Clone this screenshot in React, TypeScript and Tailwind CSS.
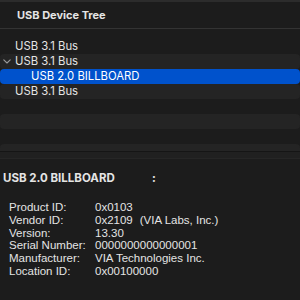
import React from 'react';

const font = { fontFamily: 'Inter, "Liberation Sans", sans-serif' };

type Row = { label: string; depth: number; open?: boolean; selected?: boolean };

const rows: Row[] = [
  { label: 'USB 3.1 Bus', depth: 0 },
  { label: 'USB 3.1 Bus', depth: 0, open: true },
  { label: 'USB 2.0 BILLBOARD', depth: 1, selected: true },
  { label: 'USB 3.1 Bus', depth: 0 },
  { label: '', depth: 0 },
  { label: '', depth: 0 },
  { label: '', depth: 0 },
  { label: '', depth: 0 },
];

const details: [string, React.ReactNode][] = [
  ['Product ID:', '0x0103'],
  ['Vendor ID:', <>0x2109<span className="ml-[7px]">(VIA Labs, Inc.)</span></>],
  ['Version:', '13.30'],
  ['Serial Number:', '0000000000000001'],
  ['Manufacturer:', 'VIA Technologies Inc.'],
  ['Location ID:', '0x00100000'],
];

function App() {
  return (
    <div className="w-[300px] h-[300px] bg-[#1c1c1c] overflow-hidden flex flex-col text-[#e4e4e4]" style={font}>
      {/* Header */}
      <div className="border-t-2 border-[#2c2c2c] h-[29px] flex items-center pl-[17px] font-bold text-[11px] border-b border-b-[#333333] shrink-0">
        USB Device Tree
      </div>

      {/* Tree list */}
      <div className="h-[122px] pt-[10px] overflow-hidden shrink-0">
        {rows.map((r, i) => (
          <div
            key={i}
            className={
              'h-[15px] flex items-center text-[11.3px] rounded-[4px] relative ' +
              (r.selected ? 'bg-[#0052cc] text-white' : i % 2 === 1 ? 'bg-[#242424]' : '')
            }
            style={{ paddingLeft: r.depth ? 31 : 15 }}
          >
            {r.open && (
              <svg className="absolute left-[3px] top-[5px]" width="8" height="5" viewBox="0 0 8 5" fill="none">
                <path d="M0.8 0.8 L4 4 L7.2 0.8" stroke="#9a9a9a" strokeWidth="1.1" strokeLinecap="round" strokeLinejoin="round" />
              </svg>
            )}
            {r.label}
          </div>
        ))}
      </div>

      {/* Split */}
      <div className="h-[8px] bg-[#202020] border-t border-[#151515] border-b border-b-[#262626] shrink-0" />

      {/* Details */}
      <div className="flex-1 pt-[13px] pl-[3px]">
        <div className="flex items-center font-bold text-[11.5px] h-[14px]">
          <span className="w-[149px]">USB 2.0 BILLBOARD</span>
          <span>:</span>
        </div>
        <div className="mt-[15px] pl-[6px] text-[11.5px] leading-[12.8px]" style={{ fontFamily: '"Liberation Sans", Arial, sans-serif' }}>
          {details.map(([k, v]) => (
            <div key={k} className="flex">
              <span className="w-[86px] shrink-0">{k}</span>
              <span className="whitespace-nowrap">{v}</span>
            </div>
          ))}
        </div>
      </div>
    </div>
  );
}

export default App;
